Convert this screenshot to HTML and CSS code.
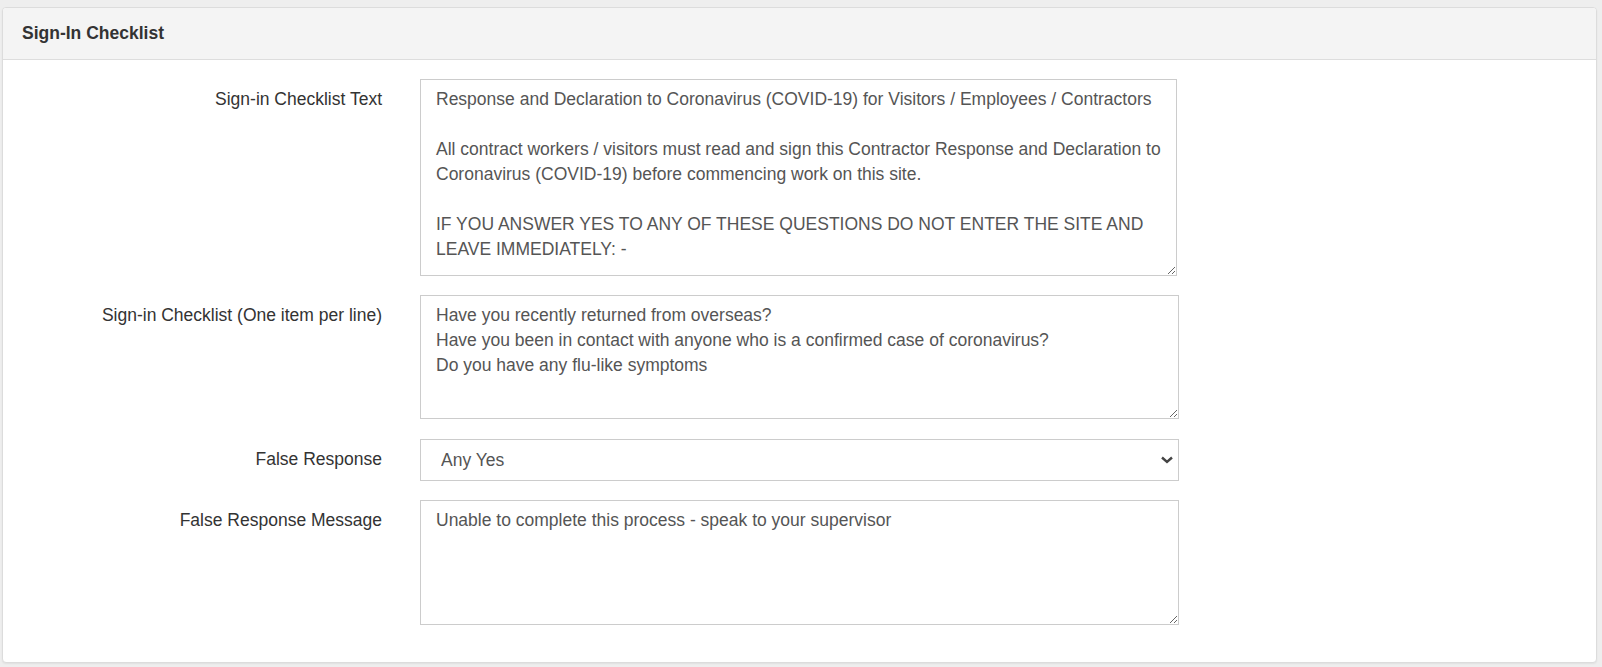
FILE: index.html
```html
<!DOCTYPE html>
<html lang="en">
<head>
<meta charset="utf-8">
<title>Sign-In Checklist</title>
<link rel="stylesheet" href="styles.css">
</head>
<body>
<div class="panel">
  <div class="panel-heading">Sign-In Checklist</div>
  <div class="panel-body">
    <div class="form-row">
      <label class="control-label" for="t1">Sign-in Checklist Text</label>
      <textarea id="t1" class="form-control ta-text">Response and Declaration to Coronavirus (COVID-19) for Visitors / Employees / Contractors

All contract workers / visitors must read and sign this Contractor Response and Declaration to Coronavirus (COVID-19) before commencing work on this site.

IF YOU ANSWER YES TO ANY OF THESE QUESTIONS DO NOT ENTER THE SITE AND LEAVE IMMEDIATELY: -</textarea>
    </div>
    <div class="form-row">
      <label class="control-label" for="t2">Sign-in Checklist (One item per line)</label>
      <textarea id="t2" class="form-control ta-list">Have you recently returned from overseas?
Have you been in contact with anyone who is a confirmed case of coronavirus?
Do you have any flu-like symptoms</textarea>
    </div>
    <div class="form-row">
      <label class="control-label" for="s1">False Response</label>
      <div class="select-wrap">
        <select id="s1" class="form-control select">
          <option>Any Yes</option>
          <option>Any No</option>
        </select>
        <svg class="chevron" width="12" height="8" viewBox="0 0 12 8"><polyline points="1,1.5 6,6 11,1.5" fill="none" stroke="#444" stroke-width="2.4"/></svg>
      </div>
    </div>
    <div class="form-row last">
      <label class="control-label" for="t4">False Response Message</label>
      <textarea id="t4" class="form-control ta-msg">Unable to complete this process - speak to your supervisor</textarea>
    </div>
  </div>
</div>
</body>
</html>
```
FILE: styles.css
```css
html, body {
  margin: 0;
  padding: 0;
}
body {
  background: #eeeeee;
  font-family: "Liberation Sans", Arial, sans-serif;
  color: #333;
  font-size: 17.5px;
  line-height: 25px;
}
.panel {
  margin: 7px 5px 5px 2px;
  background: #fff;
  border: 1px solid #dcdcdc;
  border-radius: 4px;
  box-shadow: 0 1px 2px rgba(0, 0, 0, 0.06);
  overflow: hidden;
}
.panel-heading {
  height: 51px;
  display: flex;
  align-items: center;
  padding-left: 19px;
  background: #f4f4f4;
  border-bottom: 1px solid #dddddd;
  font-weight: bold;
  font-size: 17.5px;
  color: #333;
}
.panel-body {
  padding: 19px 20px 37px 20px;
}
.form-row {
  display: grid;
  grid-template-columns: 359px 759px;
  column-gap: 38px;
  margin-bottom: 20px;
}
.form-row.last {
  margin-bottom: 0;
}
.control-label {
  text-align: right;
  padding-top: 8px;
  color: #333;
}
.form-control {
  box-sizing: border-box;
  width: 759px;
  margin: 0;
  border: 1px solid #cccccc;
  border-radius: 0;
  background: #fff;
  color: #555;
  font-family: "Liberation Sans", Arial, sans-serif;
  font-size: 17.5px;
  line-height: 25px;
  padding: 7px 15px;
  outline: none;
  display: block;
}
textarea.form-control {
  resize: both;
  overflow: hidden;
}
.ta-text {
  width: 757px;
  height: 197px;
  margin-bottom: -1px;
}
.ta-list {
  height: 124px;
}
.ta-msg {
  height: 125px;
}
.select-wrap {
  position: relative;
  width: 759px;
}
.select {
  appearance: none;
  -webkit-appearance: none;
  height: 42px;
  padding: 0 40px 0 20px;
  margin-bottom: -1px;
}
.chevron {
  position: absolute;
  right: 6px;
  top: 17px;
  pointer-events: none;
}
```
